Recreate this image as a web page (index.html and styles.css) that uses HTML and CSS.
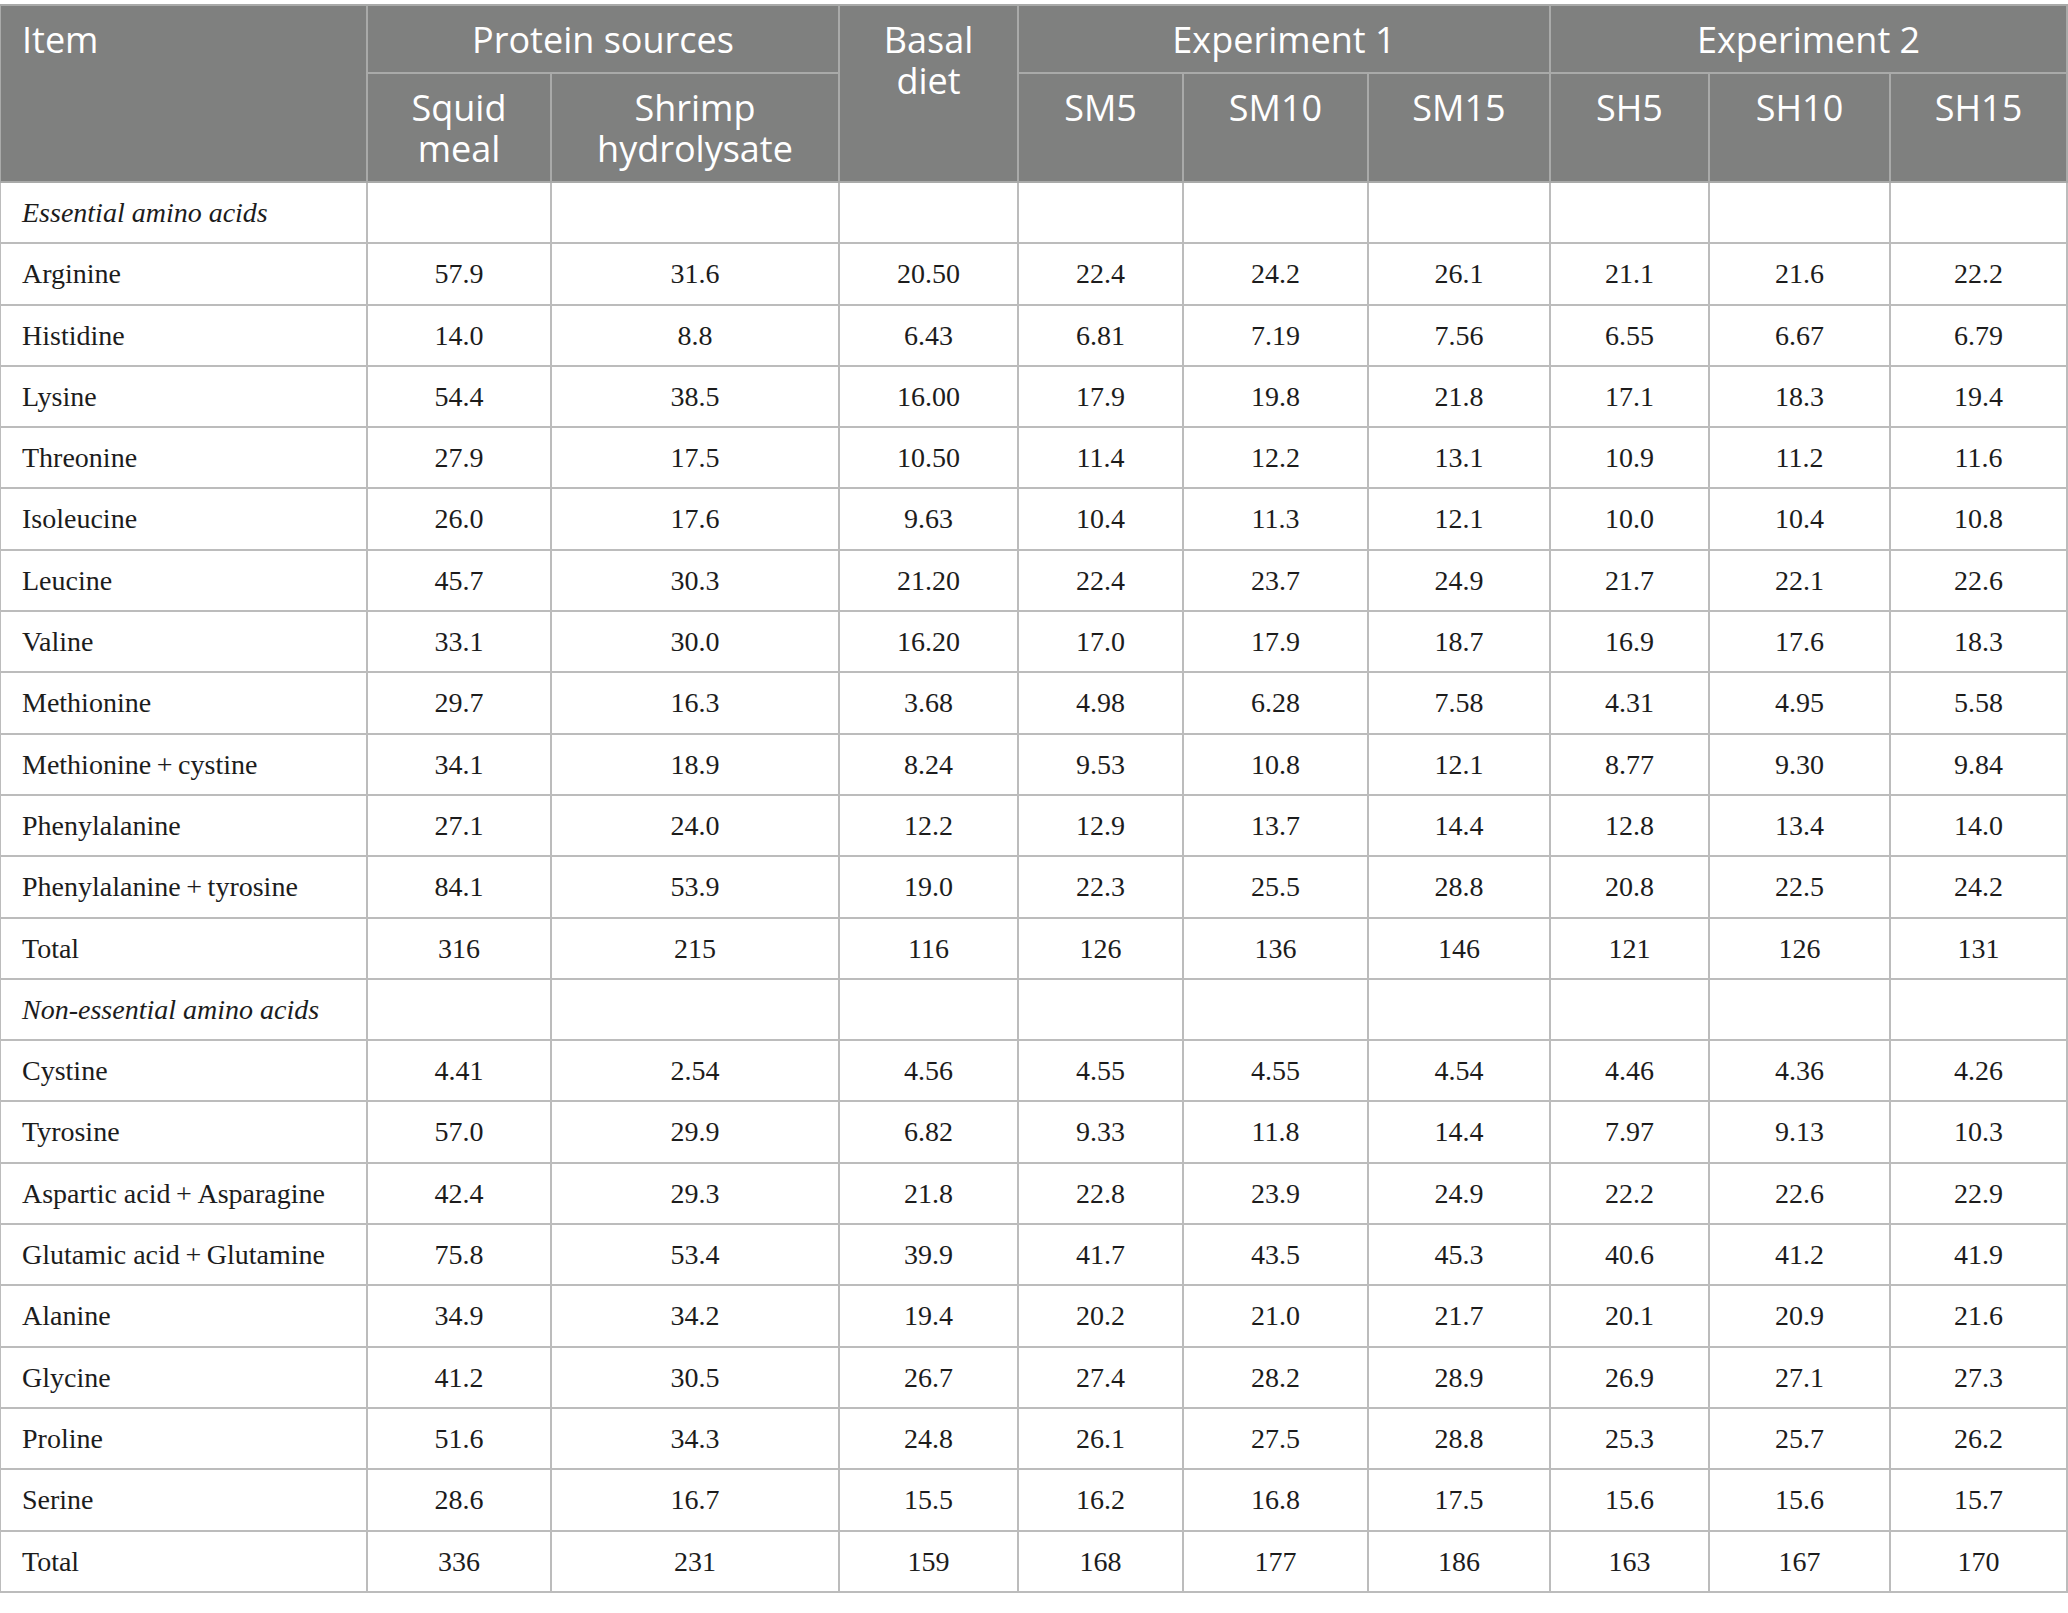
FILE: index.html
```html
<!DOCTYPE html>
<html>
<head>
  <title>Amino acid composition</title>
  <link rel="stylesheet" href="styles.css">
</head>
<body>
  <table class="aa-table">
    <colgroup>
      <col class="c-item">
      <col class="c-squid">
      <col class="c-shrimp">
      <col class="c-basal">
      <col class="c-sm5">
      <col class="c-sm10">
      <col class="c-sm15">
      <col class="c-sh5">
      <col class="c-sh10">
      <col class="c-sh15">
    </colgroup>
    <thead>
      <tr>
        <th rowspan="2" class="left">Item</th>
        <th colspan="2">Protein sources</th>
        <th rowspan="2">Basal<br>diet</th>
        <th colspan="3">Experiment 1</th>
        <th colspan="3">Experiment 2</th>
      </tr>
      <tr>
        <th>Squid<br>meal</th>
        <th>Shrimp<br>hydrolysate</th>
        <th>SM5</th>
        <th>SM10</th>
        <th>SM15</th>
        <th>SH5</th>
        <th>SH10</th>
        <th>SH15</th>
      </tr>
    </thead>
    <tbody id="tableBody"></tbody>
  </table>

  <script>
    var rows = [
      ["*Essential amino acids"],
      ["Arginine", "57.9", "31.6", "20.50", "22.4", "24.2", "26.1", "21.1", "21.6", "22.2"],
      ["Histidine", "14.0", "8.8", "6.43", "6.81", "7.19", "7.56", "6.55", "6.67", "6.79"],
      ["Lysine", "54.4", "38.5", "16.00", "17.9", "19.8", "21.8", "17.1", "18.3", "19.4"],
      ["Threonine", "27.9", "17.5", "10.50", "11.4", "12.2", "13.1", "10.9", "11.2", "11.6"],
      ["Isoleucine", "26.0", "17.6", "9.63", "10.4", "11.3", "12.1", "10.0", "10.4", "10.8"],
      ["Leucine", "45.7", "30.3", "21.20", "22.4", "23.7", "24.9", "21.7", "22.1", "22.6"],
      ["Valine", "33.1", "30.0", "16.20", "17.0", "17.9", "18.7", "16.9", "17.6", "18.3"],
      ["Methionine", "29.7", "16.3", "3.68", "4.98", "6.28", "7.58", "4.31", "4.95", "5.58"],
      ["Methionine\u2009+\u2009cystine", "34.1", "18.9", "8.24", "9.53", "10.8", "12.1", "8.77", "9.30", "9.84"],
      ["Phenylalanine", "27.1", "24.0", "12.2", "12.9", "13.7", "14.4", "12.8", "13.4", "14.0"],
      ["Phenylalanine\u2009+\u2009tyrosine", "84.1", "53.9", "19.0", "22.3", "25.5", "28.8", "20.8", "22.5", "24.2"],
      ["Total", "316", "215", "116", "126", "136", "146", "121", "126", "131"],
      ["*Non-essential amino acids"],
      ["Cystine", "4.41", "2.54", "4.56", "4.55", "4.55", "4.54", "4.46", "4.36", "4.26"],
      ["Tyrosine", "57.0", "29.9", "6.82", "9.33", "11.8", "14.4", "7.97", "9.13", "10.3"],
      ["Aspartic acid\u2009+\u2009Asparagine", "42.4", "29.3", "21.8", "22.8", "23.9", "24.9", "22.2", "22.6", "22.9"],
      ["Glutamic acid\u2009+\u2009Glutamine", "75.8", "53.4", "39.9", "41.7", "43.5", "45.3", "40.6", "41.2", "41.9"],
      ["Alanine", "34.9", "34.2", "19.4", "20.2", "21.0", "21.7", "20.1", "20.9", "21.6"],
      ["Glycine", "41.2", "30.5", "26.7", "27.4", "28.2", "28.9", "26.9", "27.1", "27.3"],
      ["Proline", "51.6", "34.3", "24.8", "26.1", "27.5", "28.8", "25.3", "25.7", "26.2"],
      ["Serine", "28.6", "16.7", "15.5", "16.2", "16.8", "17.5", "15.6", "15.6", "15.7"],
      ["Total", "336", "231", "159", "168", "177", "186", "163", "167", "170"]
    ];

    var tableBody = document.getElementById("tableBody");

    // Build the body rows
    rows.forEach(function (row) {
      var tr = document.createElement("tr");
      var label = row[0];
      var first = document.createElement("td");
      first.classList.add("label");
      if (label.charAt(0) === "*") {
        label = label.slice(1);
        first.classList.add("section");
      }
      first.innerText = label;
      tr.appendChild(first);

      for (var i = 1; i < 10; i++) {
        var td = document.createElement("td");
        td.innerText = row[i] || "";
        tr.appendChild(td);
      }
      tableBody.appendChild(tr);
    });
  </script>
</body>
</html>
```

FILE: styles.css
```css
/* Amino acid table */
body {
  margin: 0;
  padding: 4px 0 0 0;
  background-color: #fff;
}

.aa-table {
  border-collapse: collapse;
  table-layout: fixed;
  width: 2067px;
  margin-left: -1px;
}

.c-item { width: 367px; }
.c-squid { width: 184px; }
.c-shrimp { width: 288px; }
.c-basal { width: 179px; }
.c-sm5 { width: 165px; }
.c-sm10 { width: 185px; }
.c-sm15 { width: 182px; }
.c-sh5 { width: 159px; }
.c-sh10 { width: 181px; }
.c-sh15 { width: 177px; }

.aa-table th {
  background-color: #7f807f;
  color: #fff;
  font-family: "Open Sans", "Noto Sans", sans-serif;
  font-weight: 400;
  font-size: 36px;
  line-height: 41px;
  text-align: center;
  vertical-align: top;
  border: 2px solid #a9aaa9;
  padding: 13px 8px 12px 8px;
}

.aa-table th.left {
  text-align: left;
  padding-left: 21px;
}

.aa-table td {
  font-family: "Liberation Serif", "Times New Roman", serif;
  font-size: 28px;
  line-height: 31.3px;
  color: #1c1c1c;
  text-align: center;
  vertical-align: middle;
  border: 2px solid #bcbcbc;
  padding: 14px 10px;
}

.aa-table td.label {
  text-align: left;
  padding-left: 21px;
}

.aa-table td.section {
  font-style: italic;
}
```
